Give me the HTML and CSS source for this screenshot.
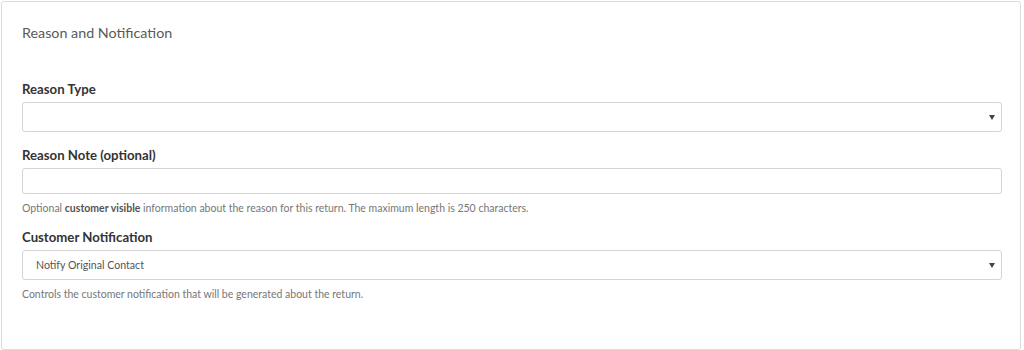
FILE: index.html
```html
<!DOCTYPE html>
<html lang="en">
<head>
    <meta charset="UTF-8">
    <title>Reason and Notification</title>
    <link rel="stylesheet" href="styles.css">
</head>
<body>
    <div class="card">
        <h3 class="card-title">Reason and Notification</h3>

        <div class="field">
            <label class="field-label">Reason Type</label>
            <div class="select">
                <span class="select-value"></span>
                <span class="caret"></span>
            </div>
        </div>

        <div class="field">
            <label class="field-label">Reason Note (optional)</label>
            <div class="input"></div>
            <p class="help">Optional <b>customer visible</b> information about the reason for this return. The maximum length is 250 characters.</p>
        </div>

        <div class="field">
            <label class="field-label">Customer Notification</label>
            <div class="select">
                <span class="select-value">Notify Original Contact</span>
                <span class="caret"></span>
            </div>
            <p class="help">Controls the customer notification that will be generated about the return.</p>
        </div>
    </div>
</body>
</html>
```

FILE: styles.css
```css
body {
    margin: 0;
    padding: 1px 3px 0 1px;
    background: #fff;
    font-family: Lato, "Liberation Sans", sans-serif;
    color: #333;
}
.card {
    height: 349px;
    box-sizing: border-box;
    border: 1px solid #dcdcdc;
    border-radius: 3px;
    padding: 23px 18px 0 20px;
}
.card-title {
    margin: 0 0 41px;
    font-size: 14.3px;
    font-weight: normal;
    color: #5a5a5a;
    line-height: 16px;
}
.field {
    margin-bottom: 16px;
}
.field-label {
    display: block;
    font-size: 13.2px;
    font-weight: bold;
    line-height: 15px;
    margin-bottom: 5px;
    color: #333;
}
.select,
.input {
    display: flex;
    align-items: center;
    justify-content: space-between;
    height: 30px;
    box-sizing: border-box;
    border: 1px solid #d4d4d4;
    border-radius: 3px;
    padding: 0 6px 0 13px;
    background: #fff;
}
.input {
    height: 26px;
}
.select-value {
    font-size: 10.6px;
    color: #555;
}
.caret {
    width: 0;
    height: 0;
    border-left: 3px solid transparent;
    border-right: 3px solid transparent;
    border-top: 5px solid #444;
}
.help {
    margin: 8px 0 0;
    font-size: 10.5px;
    line-height: 12px;
    color: #777;
}
.help b {
    color: #555;
}
```
